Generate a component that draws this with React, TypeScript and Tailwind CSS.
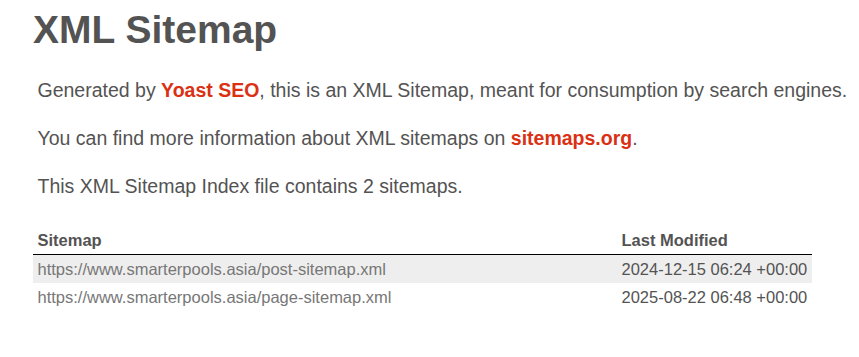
const sitemaps = [
  { loc: "https://www.smarterpools.asia/post-sitemap.xml", lastmod: "2024-12-15 06:24 +00:00" },
  { loc: "https://www.smarterpools.asia/page-sitemap.xml", lastmod: "2025-08-22 06:48 +00:00" },
];

export default function App() {
  return (
    <div
      className="min-h-screen bg-white pt-[7px] pl-[33px] text-[#545353]"
      style={{ fontFamily: "Helvetica, Arial, 'Liberation Sans', sans-serif" }}
    >
      <h1 className="text-[39px] font-bold leading-[45px] mb-[27px]">XML Sitemap</h1>

      <p className="mx-[4.5px] mb-[25px] text-[19.5px] leading-[23px]">
        Generated by{" "}
        <a href="https://yoa.st/1y5" className="font-bold text-[#da3114]">Yoast SEO</a>, this is an XML
        Sitemap, meant for consumption by search engines.
      </p>
      <p className="mx-[4.5px] mb-[25px] text-[19.5px] leading-[23px]">
        You can find more information about XML sitemaps on{" "}
        <a href="https://sitemaps.org" className="font-bold text-[#da3114]">sitemaps.org</a>.
      </p>
      <p className="mx-[4.5px] mb-[28px] text-[19.5px] leading-[23px]">
        This XML Sitemap Index file contains 2 sitemaps.
      </p>

      <table className="w-[779px] border-collapse text-[16.5px] leading-[19px]">
        <thead>
          <tr>
            <th className="border-b border-black p-[4.5px] text-left font-bold">Sitemap</th>
            <th className="w-[195px] border-b border-black p-[4.5px] text-left font-bold">Last Modified</th>
          </tr>
        </thead>
        <tbody>
          {sitemaps.map((s, i) => (
            <tr key={s.loc} className={i % 2 === 0 ? "bg-[#eee]" : ""}>
              <td className="p-[4.5px]">
                <a href={s.loc} className="text-[#777]">{s.loc}</a>
              </td>
              <td className="p-[4.5px]">{s.lastmod}</td>
            </tr>
          ))}
        </tbody>
      </table>
    </div>
  );
}
